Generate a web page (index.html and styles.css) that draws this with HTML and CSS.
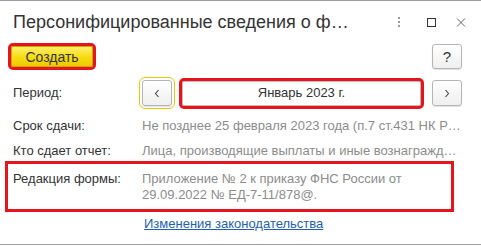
FILE: index.html
```html
<!DOCTYPE html>
<html lang="ru">
<head>
<meta charset="utf-8">
<title>Персонифицированные сведения</title>
<link rel="stylesheet" href="styles.css">
</head>
<body>
<div class="window">
  <div class="header">
    <div class="title">Персонифицированные сведения о ф…</div>
    <div class="win-icons">
      <svg class="ic ic-dots" width="10" height="10" viewBox="0 0 10 10"><rect x="4" y="0" width="2" height="2" fill="#9a9a9a"/><rect x="4" y="4" width="2" height="2" fill="#9a9a9a"/><rect x="4" y="8" width="2" height="2" fill="#9a9a9a"/></svg>
      <svg class="ic ic-max" width="10" height="10" viewBox="0 0 10 10"><rect x="1.5" y="1.5" width="8" height="8" fill="none" stroke="#333" stroke-width="1"/></svg>
      <svg class="ic ic-close" width="10" height="10" viewBox="0 0 10 10"><path d="M1 1.5 L9 9.5 M9 1.5 L1 9.5" stroke="#666" stroke-width="1" fill="none"/></svg>
    </div>
  </div>
  <div class="toolbar">
    <button class="btn-create">Создать</button>
    <button class="btn btn-help">?</button>
  </div>
  <div class="form">
    <div class="row row-period">
      <div class="label">Период:</div>
      <div class="period">
        <button class="btn btn-nav btn-prev"><svg width="6" height="9" viewBox="0 0 6 9"><path d="M4.5 1 L1.5 4.5 L4.5 8" stroke="#444" stroke-width="1.1" fill="none"/></svg></button>
        <div class="period-field">Январь 2023 г.</div>
        <button class="btn btn-nav"><svg width="6" height="9" viewBox="0 0 6 9"><path d="M1.5 1 L4.5 4.5 L1.5 8" stroke="#444" stroke-width="1.1" fill="none"/></svg></button>
      </div>
    </div>
    <div class="row row-due">
      <div class="label">Срок сдачи:</div>
      <div class="value">Не позднее 25 февраля 2023 года (п.7 ст.431 НК Р…</div>
    </div>
    <div class="row row-who">
      <div class="label">Кто сдает отчет:</div>
      <div class="value">Лица, производящие выплаты и иные вознагражд…</div>
    </div>
    <div class="row row-edition">
      <div class="label">Редакция формы:</div>
      <div class="value">Приложение № 2 к приказу ФНС России от<br>29.09.2022 № ЕД-7-11/878@.</div>
    </div>
    <div class="row row-link">
      <div></div>
      <div><a class="link" href="#">Изменения законодательства</a></div>
    </div>
  </div>
</div>
</body>
</html>
```
FILE: styles.css
```css
* { box-sizing: border-box; }
html, body { margin: 0; padding: 0; background: #fff; }
body { font-family: "Liberation Sans", Arial, sans-serif; color: #333; }

.window {
  width: 481px;
  height: 245px;
  border-top: 1px solid #a0a0a0;
  border-bottom: 1px solid #a0a0a0;
  background: #fff;
}

.header {
  display: flex;
  align-items: center;
  height: 22px;
  margin-top: 10px;
  padding-left: 13px;
}
.title {
  font-size: 18px;
  line-height: 22px;
  color: #333;
  white-space: nowrap;
}
.win-icons {
  margin-left: auto;
  display: flex;
  align-items: center;
  padding-right: 15px;
}
.ic { display: block; }
.ic-max { margin-left: 22px; }
.ic-close { margin-left: 20px; }

.toolbar {
  display: flex;
  align-items: center;
  justify-content: space-between;
  height: 25px;
  margin-top: 11px;
  padding: 0 19px 0 11px;
}
.btn-create {
  width: 82px;
  height: 21px;
  padding: 0;
  font-family: inherit;
  font-size: 14px;
  color: #333;
  background: linear-gradient(#fff06a, #f6db12 55%, #eccb00);
  border: 1px solid #c8a600;
  border-radius: 2px;
  outline: 3px solid #e8141c;
  outline-offset: 0;
}
.btn {
  padding: 0;
  font-family: inherit;
  background: linear-gradient(#ffffff, #efefef);
  border: 1px solid #b5b5b5;
  border-radius: 3px;
  box-shadow: 0 1px 1px rgba(0,0,0,0.12);
  color: #333;
  display: flex;
  align-items: center;
  justify-content: center;
}
.btn-help {
  width: 30px;
  height: 25px;
  font-size: 15px;
}

.form {
  padding: 0 19px 0 13px;
}
.row {
  display: grid;
  grid-template-columns: 129px 1fr;
  font-size: 13px;
  line-height: 16px;
}
.label { color: #333; white-space: nowrap; }
.value { color: #8c8c8c; white-space: nowrap; }

.row-period {
  margin-top: 11px;
  height: 26px;
  align-items: center;
}
.period {
  display: flex;
  align-items: center;
  height: 26px;
}
.btn-nav {
  width: 30px;
  height: 26px;
  flex: none;
}
.btn-prev {
  outline: 1px solid #f2c500;
  outline-offset: 2px;
}
.period-field {
  width: 239px;
  height: 25px;
  margin: 0 11px 0 10px;
  border: 1px solid #bdbdbd;
  border-radius: 2px;
  display: flex;
  align-items: center;
  justify-content: center;
  color: #333;
  outline: 3px solid #e8141c;
}

.row-due { margin-top: 12px; }
.row-who { margin-top: 9px; }
.row-edition {
  margin-top: 10px;
  margin-right: 16px;
  padding: 2px 0 1px;
  outline: 3px solid #e8141c;
  outline-offset: 5px;
}
.row-link { margin-top: 12px; }
.link {
  color: #1d5fb8;
  text-decoration: underline;
  padding-left: 2px;
}
```
